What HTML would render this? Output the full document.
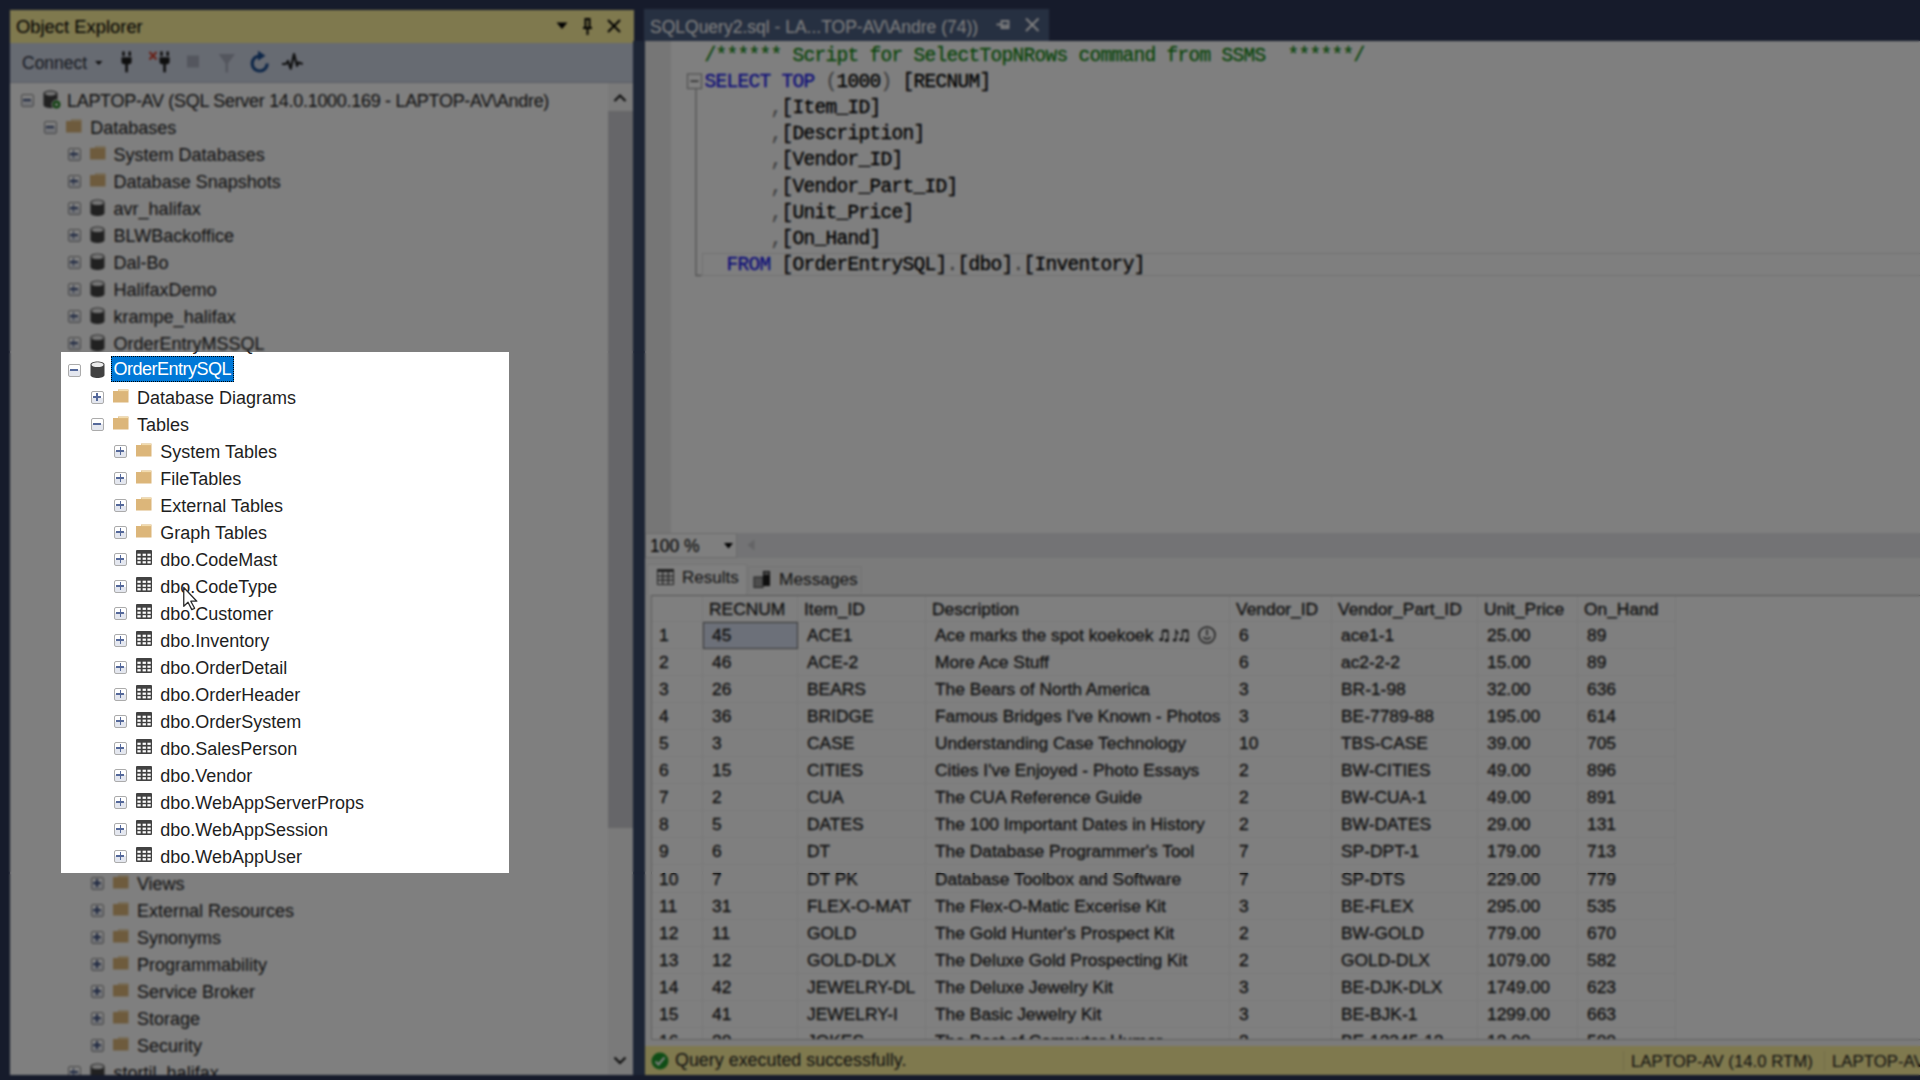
<!DOCTYPE html><html><head><meta charset="utf-8"><style>
*{margin:0;padding:0;box-sizing:border-box}
html,body{width:1920px;height:1080px;overflow:hidden;background:#2d3757;font-family:"Liberation Sans",sans-serif}
.abs{position:absolute}
#oe-title{left:10px;top:10px;width:624px;height:33px;background:#fff29d;}
#oe-tb{left:10px;top:43px;width:624px;height:40px;background:#cfd6e5;border-bottom:1.5px solid #b4bac8}
#tree{left:10px;top:83px;width:623px;height:992px;background:#fff;overflow:hidden;}
.row{position:absolute;left:0;height:27px;width:600px;line-height:27px;font-size:18px;color:#1e1e1e;white-space:nowrap}
.exp{position:absolute;width:13px;height:13px;top:7px;border:1.6px solid #ababab;border-radius:2px;background:linear-gradient(#fff 50%,#e4e7ef 50%)}
.exp:before{content:"";position:absolute;left:1.1px;top:4.25px;width:8px;height:1.5px;background:#54689a}
.exp.p:after{content:"";position:absolute;left:4.35px;top:1px;width:1.5px;height:8px;background:#54689a}
.ic{position:absolute}
.txt{position:absolute;top:0.8px}
.dim .txt{-webkit-text-stroke-width:0.05px}
.dim .exp{border-color:#8f8f8f}
.dim .exp:before,.dim .exp.p:after{background:#3f5283}
#vs{left:598px;top:0;width:25px;height:992px;background:#f4f4f4}
#editor{left:645px;top:41px;width:1275px;height:492px;background:#fff;overflow:hidden}
#margin{left:0;top:0;width:26px;height:492px;background:#ececec}
.code{position:absolute;left:59.5px;font-family:"Liberation Mono",monospace;font-size:19.5px;letter-spacing:-0.7px;line-height:26.2px;white-space:pre;color:#000;-webkit-text-stroke-width:0.3px}
.cm{color:#138a13}.kw{color:#1a1af0}.gy{color:#808080}
.gc{position:absolute;font-size:17.4px;-webkit-text-stroke-width:0.3px;color:#1e1e1e;white-space:nowrap;overflow:hidden;border-right:1px solid #f0f0f0;border-bottom:1px solid #f3f3f3}
#status{left:645px;top:1046px;width:1275px;height:29px;background:#fff29d}
</style></head><body>
<div id="oe-title" class="abs">
<div class="abs" style="left:6px;top:0;line-height:33px;font-size:18.4px;color:#000">Object Explorer</div>
<svg class="abs" style="left:546px;top:12px" width="12" height="8"><path d="M0.5 0.5h11L6 7z" fill="#000"/></svg>
<svg class="abs" style="left:572px;top:8px" width="11" height="18"><path d="M2.5 1h6M3.5 1v9M7.5 1v9M1 10h9M5.5 10v7" stroke="#000" stroke-width="2" fill="none"/></svg>
<svg class="abs" style="left:597px;top:9px" width="14" height="14"><path d="M1 1L13 13M13 1L1 13" stroke="#000" stroke-width="2"/></svg>
</div>
<div id="oe-tb" class="abs">
<div class="abs" style="left:12px;top:0;line-height:40px;font-size:17.5px;color:#2d3340">Connect</div>
<svg class="abs" style="left:0;top:0" width="624" height="40" viewBox="10 43 624 40"><g transform="translate(121,50)"><rect x="1.2" y="1.25" width="2.6" height="5" rx="1.2" fill="#1e1e1e"/><rect x="7.4" y="1.25" width="2.6" height="5" rx="1.2" fill="#1e1e1e"/><path d="M0.5 7.2H10.6V11.5Q10.6 14.3 8 14.3H3Q0.5 14.3 0.5 11.5Z" fill="#1e1e1e"/><rect x="4.3" y="14" width="2.6" height="8.3" fill="#1e1e1e"/></g><g transform="translate(159,50)"><rect x="1.2" y="1.25" width="2.6" height="5" rx="1.2" fill="#1e1e1e"/><rect x="7.4" y="1.25" width="2.6" height="5" rx="1.2" fill="#1e1e1e"/><path d="M0.5 7.2H10.6V11.5Q10.6 14.3 8 14.3H3Q0.5 14.3 0.5 11.5Z" fill="#1e1e1e"/><rect x="4.3" y="14" width="2.6" height="8.3" fill="#1e1e1e"/></g><path d="M149.5 52L156.5 59.5M156.5 52L149.5 59.5" stroke="#d0402c" stroke-width="2"/><rect x="187" y="55.5" width="12" height="12" fill="#a8adbc"/><path d="M218.6 54H235L228 63.5V72.5H225.5V63.5Z" fill="#a8adbc"/><path d="M259.7 56A7.5 7.5 0 1 0 267.2 63.5" stroke="#1c4e90" stroke-width="3.2" fill="none"/><path d="M258 50.7L265.5 55.8L258 60.8Z" fill="#1c4e90"/><path d="M282 64H286L288 61L290.7 68.7L294 54L297 65.8L298.5 62.5L302.7 64" stroke="#1e1e1e" stroke-width="2.2" fill="none" stroke-linejoin="round"/><path d="M95 61H102.5L98.75 65Z" fill="#1e1e1e"/></svg>
</div>
<div id="tree" class="abs">
<div class="row dim" style="top:4.0px">
<div class="exp m" style="left:11.0px"></div>
<svg class="ic" style="left:33.0px;top:3px" width="19" height="20"><path d="M0.5 3.5C0.5 -0.5 14.5 -0.5 14.5 3.5V15C14.5 19 0.5 19 0.5 15Z" fill="#424242"/><ellipse cx="7.5" cy="3.6" rx="5.6" ry="2.1" fill="#ececec"/><circle cx="13.5" cy="14.5" r="4.5" fill="#1e7e1e" stroke="#fff" stroke-width="1"/><circle cx="13.5" cy="14.5" r="1.6" fill="#fff"/></svg>
<div class="txt" style="left:57.0px;letter-spacing:-0.3px;">LAPTOP-AV (SQL Server 14.0.1000.169 - LAPTOP-AV\Andre)</div>
</div>
<div class="row dim" style="top:31.0px">
<div class="exp m" style="left:34.3px"></div>
<svg class="ic" style="left:56.3px;top:5px" width="16" height="14"><path d="M5 0.5h10.5v13h-15.5v-11.5h5z" fill="#dcb67a"/><path d="M5.5 1.5h9.5" stroke="#f2dcae" stroke-width="1.2"/></svg>
<div class="txt" style="left:80.3px;">Databases</div>
</div>
<div class="row dim" style="top:58.0px">
<div class="exp p" style="left:57.6px"></div>
<svg class="ic" style="left:79.6px;top:5px" width="16" height="14"><path d="M5 0.5h10.5v13h-15.5v-11.5h5z" fill="#dcb67a"/><path d="M5.5 1.5h9.5" stroke="#f2dcae" stroke-width="1.2"/></svg>
<div class="txt" style="left:103.6px;">System Databases</div>
</div>
<div class="row dim" style="top:85.0px">
<div class="exp p" style="left:57.6px"></div>
<svg class="ic" style="left:79.6px;top:5px" width="16" height="14"><path d="M5 0.5h10.5v13h-15.5v-11.5h5z" fill="#dcb67a"/><path d="M5.5 1.5h9.5" stroke="#f2dcae" stroke-width="1.2"/></svg>
<div class="txt" style="left:103.6px;">Database Snapshots</div>
</div>
<div class="row dim" style="top:112.0px">
<div class="exp p" style="left:57.6px"></div>
<svg class="ic" style="left:79.6px;top:4px" width="15" height="18"><path d="M0.5 3.5C0.5 -0.5 14.5 -0.5 14.5 3.5V14C14.5 18 0.5 18 0.5 14Z" fill="#424242"/><ellipse cx="7.5" cy="3.7" rx="6" ry="2.4" fill="#ececec"/></svg>
<div class="txt" style="left:103.6px;">avr_halifax</div>
</div>
<div class="row dim" style="top:139.0px">
<div class="exp p" style="left:57.6px"></div>
<svg class="ic" style="left:79.6px;top:4px" width="15" height="18"><path d="M0.5 3.5C0.5 -0.5 14.5 -0.5 14.5 3.5V14C14.5 18 0.5 18 0.5 14Z" fill="#424242"/><ellipse cx="7.5" cy="3.7" rx="6" ry="2.4" fill="#ececec"/></svg>
<div class="txt" style="left:103.6px;">BLWBackoffice</div>
</div>
<div class="row dim" style="top:166.0px">
<div class="exp p" style="left:57.6px"></div>
<svg class="ic" style="left:79.6px;top:4px" width="15" height="18"><path d="M0.5 3.5C0.5 -0.5 14.5 -0.5 14.5 3.5V14C14.5 18 0.5 18 0.5 14Z" fill="#424242"/><ellipse cx="7.5" cy="3.7" rx="6" ry="2.4" fill="#ececec"/></svg>
<div class="txt" style="left:103.6px;">Dal-Bo</div>
</div>
<div class="row dim" style="top:193.0px">
<div class="exp p" style="left:57.6px"></div>
<svg class="ic" style="left:79.6px;top:4px" width="15" height="18"><path d="M0.5 3.5C0.5 -0.5 14.5 -0.5 14.5 3.5V14C14.5 18 0.5 18 0.5 14Z" fill="#424242"/><ellipse cx="7.5" cy="3.7" rx="6" ry="2.4" fill="#ececec"/></svg>
<div class="txt" style="left:103.6px;">HalifaxDemo</div>
</div>
<div class="row dim" style="top:220.0px">
<div class="exp p" style="left:57.6px"></div>
<svg class="ic" style="left:79.6px;top:4px" width="15" height="18"><path d="M0.5 3.5C0.5 -0.5 14.5 -0.5 14.5 3.5V14C14.5 18 0.5 18 0.5 14Z" fill="#424242"/><ellipse cx="7.5" cy="3.7" rx="6" ry="2.4" fill="#ececec"/></svg>
<div class="txt" style="left:103.6px;">krampe_halifax</div>
</div>
<div class="row dim" style="top:247.0px">
<div class="exp p" style="left:57.6px"></div>
<svg class="ic" style="left:79.6px;top:4px" width="15" height="18"><path d="M0.5 3.5C0.5 -0.5 14.5 -0.5 14.5 3.5V14C14.5 18 0.5 18 0.5 14Z" fill="#424242"/><ellipse cx="7.5" cy="3.7" rx="6" ry="2.4" fill="#ececec"/></svg>
<div class="txt" style="left:103.6px;">OrderEntryMSSQL</div>
</div>
<div class="row" style="top:274.0px">
<div class="exp m" style="left:57.6px"></div>
<svg class="ic" style="left:79.6px;top:4px" width="15" height="18"><path d="M0.5 3.5C0.5 -0.5 14.5 -0.5 14.5 3.5V14C14.5 18 0.5 18 0.5 14Z" fill="#424242"/><ellipse cx="7.5" cy="3.7" rx="6" ry="2.4" fill="#ececec"/></svg>
<div class="txt" style="left:100.6px;top:-1px;height:26px;line-height:27.5px;padding:0 3px;letter-spacing:-0.5px;background:#0078d7;color:#fff;outline:1px dotted #000;outline-offset:-1px">OrderEntrySQL</div>
</div>
<div class="row" style="top:301.0px">
<div class="exp p" style="left:80.9px"></div>
<svg class="ic" style="left:102.9px;top:5px" width="16" height="14"><path d="M5 0.5h10.5v13h-15.5v-11.5h5z" fill="#dcb67a"/><path d="M5.5 1.5h9.5" stroke="#f2dcae" stroke-width="1.2"/></svg>
<div class="txt" style="left:126.9px;">Database Diagrams</div>
</div>
<div class="row" style="top:328.0px">
<div class="exp m" style="left:80.9px"></div>
<svg class="ic" style="left:102.9px;top:5px" width="16" height="14"><path d="M5 0.5h10.5v13h-15.5v-11.5h5z" fill="#dcb67a"/><path d="M5.5 1.5h9.5" stroke="#f2dcae" stroke-width="1.2"/></svg>
<div class="txt" style="left:126.9px;">Tables</div>
</div>
<div class="row" style="top:355.0px">
<div class="exp p" style="left:104.2px"></div>
<svg class="ic" style="left:126.2px;top:5px" width="16" height="14"><path d="M5 0.5h10.5v13h-15.5v-11.5h5z" fill="#dcb67a"/><path d="M5.5 1.5h9.5" stroke="#f2dcae" stroke-width="1.2"/></svg>
<div class="txt" style="left:150.2px;">System Tables</div>
</div>
<div class="row" style="top:382.0px">
<div class="exp p" style="left:104.2px"></div>
<svg class="ic" style="left:126.2px;top:5px" width="16" height="14"><path d="M5 0.5h10.5v13h-15.5v-11.5h5z" fill="#dcb67a"/><path d="M5.5 1.5h9.5" stroke="#f2dcae" stroke-width="1.2"/></svg>
<div class="txt" style="left:150.2px;">FileTables</div>
</div>
<div class="row" style="top:409.0px">
<div class="exp p" style="left:104.2px"></div>
<svg class="ic" style="left:126.2px;top:5px" width="16" height="14"><path d="M5 0.5h10.5v13h-15.5v-11.5h5z" fill="#dcb67a"/><path d="M5.5 1.5h9.5" stroke="#f2dcae" stroke-width="1.2"/></svg>
<div class="txt" style="left:150.2px;">External Tables</div>
</div>
<div class="row" style="top:436.0px">
<div class="exp p" style="left:104.2px"></div>
<svg class="ic" style="left:126.2px;top:5px" width="16" height="14"><path d="M5 0.5h10.5v13h-15.5v-11.5h5z" fill="#dcb67a"/><path d="M5.5 1.5h9.5" stroke="#f2dcae" stroke-width="1.2"/></svg>
<div class="txt" style="left:150.2px;">Graph Tables</div>
</div>
<div class="row" style="top:463.0px">
<div class="exp p" style="left:104.2px"></div>
<svg class="ic" style="left:126.2px;top:4px" width="16" height="15"><rect x="0" y="0" width="16" height="15" rx="1" fill="#424242"/><rect x="1.4" y="3.7" width="3.3" height="2.2" fill="#fff"/><rect x="6.6" y="3.7" width="3.3" height="2.2" fill="#fff"/><rect x="11.4" y="3.7" width="3.3" height="2.2" fill="#fff"/><rect x="1.4" y="7.6" width="3.3" height="2.2" fill="#fff"/><rect x="6.6" y="7.6" width="3.3" height="2.2" fill="#fff"/><rect x="11.4" y="7.6" width="3.3" height="2.2" fill="#fff"/><rect x="1.4" y="11.2" width="3.3" height="2.2" fill="#fff"/><rect x="6.6" y="11.2" width="3.3" height="2.2" fill="#fff"/><rect x="11.4" y="11.2" width="3.3" height="2.2" fill="#fff"/></svg>
<div class="txt" style="left:150.2px;">dbo.CodeMast</div>
</div>
<div class="row" style="top:490.0px">
<div class="exp p" style="left:104.2px"></div>
<svg class="ic" style="left:126.2px;top:4px" width="16" height="15"><rect x="0" y="0" width="16" height="15" rx="1" fill="#424242"/><rect x="1.4" y="3.7" width="3.3" height="2.2" fill="#fff"/><rect x="6.6" y="3.7" width="3.3" height="2.2" fill="#fff"/><rect x="11.4" y="3.7" width="3.3" height="2.2" fill="#fff"/><rect x="1.4" y="7.6" width="3.3" height="2.2" fill="#fff"/><rect x="6.6" y="7.6" width="3.3" height="2.2" fill="#fff"/><rect x="11.4" y="7.6" width="3.3" height="2.2" fill="#fff"/><rect x="1.4" y="11.2" width="3.3" height="2.2" fill="#fff"/><rect x="6.6" y="11.2" width="3.3" height="2.2" fill="#fff"/><rect x="11.4" y="11.2" width="3.3" height="2.2" fill="#fff"/></svg>
<div class="txt" style="left:150.2px;">dbo.CodeType</div>
</div>
<div class="row" style="top:517.0px">
<div class="exp p" style="left:104.2px"></div>
<svg class="ic" style="left:126.2px;top:4px" width="16" height="15"><rect x="0" y="0" width="16" height="15" rx="1" fill="#424242"/><rect x="1.4" y="3.7" width="3.3" height="2.2" fill="#fff"/><rect x="6.6" y="3.7" width="3.3" height="2.2" fill="#fff"/><rect x="11.4" y="3.7" width="3.3" height="2.2" fill="#fff"/><rect x="1.4" y="7.6" width="3.3" height="2.2" fill="#fff"/><rect x="6.6" y="7.6" width="3.3" height="2.2" fill="#fff"/><rect x="11.4" y="7.6" width="3.3" height="2.2" fill="#fff"/><rect x="1.4" y="11.2" width="3.3" height="2.2" fill="#fff"/><rect x="6.6" y="11.2" width="3.3" height="2.2" fill="#fff"/><rect x="11.4" y="11.2" width="3.3" height="2.2" fill="#fff"/></svg>
<div class="txt" style="left:150.2px;">dbo.Customer</div>
</div>
<div class="row" style="top:544.0px">
<div class="exp p" style="left:104.2px"></div>
<svg class="ic" style="left:126.2px;top:4px" width="16" height="15"><rect x="0" y="0" width="16" height="15" rx="1" fill="#424242"/><rect x="1.4" y="3.7" width="3.3" height="2.2" fill="#fff"/><rect x="6.6" y="3.7" width="3.3" height="2.2" fill="#fff"/><rect x="11.4" y="3.7" width="3.3" height="2.2" fill="#fff"/><rect x="1.4" y="7.6" width="3.3" height="2.2" fill="#fff"/><rect x="6.6" y="7.6" width="3.3" height="2.2" fill="#fff"/><rect x="11.4" y="7.6" width="3.3" height="2.2" fill="#fff"/><rect x="1.4" y="11.2" width="3.3" height="2.2" fill="#fff"/><rect x="6.6" y="11.2" width="3.3" height="2.2" fill="#fff"/><rect x="11.4" y="11.2" width="3.3" height="2.2" fill="#fff"/></svg>
<div class="txt" style="left:150.2px;">dbo.Inventory</div>
</div>
<div class="row" style="top:571.0px">
<div class="exp p" style="left:104.2px"></div>
<svg class="ic" style="left:126.2px;top:4px" width="16" height="15"><rect x="0" y="0" width="16" height="15" rx="1" fill="#424242"/><rect x="1.4" y="3.7" width="3.3" height="2.2" fill="#fff"/><rect x="6.6" y="3.7" width="3.3" height="2.2" fill="#fff"/><rect x="11.4" y="3.7" width="3.3" height="2.2" fill="#fff"/><rect x="1.4" y="7.6" width="3.3" height="2.2" fill="#fff"/><rect x="6.6" y="7.6" width="3.3" height="2.2" fill="#fff"/><rect x="11.4" y="7.6" width="3.3" height="2.2" fill="#fff"/><rect x="1.4" y="11.2" width="3.3" height="2.2" fill="#fff"/><rect x="6.6" y="11.2" width="3.3" height="2.2" fill="#fff"/><rect x="11.4" y="11.2" width="3.3" height="2.2" fill="#fff"/></svg>
<div class="txt" style="left:150.2px;">dbo.OrderDetail</div>
</div>
<div class="row" style="top:598.0px">
<div class="exp p" style="left:104.2px"></div>
<svg class="ic" style="left:126.2px;top:4px" width="16" height="15"><rect x="0" y="0" width="16" height="15" rx="1" fill="#424242"/><rect x="1.4" y="3.7" width="3.3" height="2.2" fill="#fff"/><rect x="6.6" y="3.7" width="3.3" height="2.2" fill="#fff"/><rect x="11.4" y="3.7" width="3.3" height="2.2" fill="#fff"/><rect x="1.4" y="7.6" width="3.3" height="2.2" fill="#fff"/><rect x="6.6" y="7.6" width="3.3" height="2.2" fill="#fff"/><rect x="11.4" y="7.6" width="3.3" height="2.2" fill="#fff"/><rect x="1.4" y="11.2" width="3.3" height="2.2" fill="#fff"/><rect x="6.6" y="11.2" width="3.3" height="2.2" fill="#fff"/><rect x="11.4" y="11.2" width="3.3" height="2.2" fill="#fff"/></svg>
<div class="txt" style="left:150.2px;">dbo.OrderHeader</div>
</div>
<div class="row" style="top:625.0px">
<div class="exp p" style="left:104.2px"></div>
<svg class="ic" style="left:126.2px;top:4px" width="16" height="15"><rect x="0" y="0" width="16" height="15" rx="1" fill="#424242"/><rect x="1.4" y="3.7" width="3.3" height="2.2" fill="#fff"/><rect x="6.6" y="3.7" width="3.3" height="2.2" fill="#fff"/><rect x="11.4" y="3.7" width="3.3" height="2.2" fill="#fff"/><rect x="1.4" y="7.6" width="3.3" height="2.2" fill="#fff"/><rect x="6.6" y="7.6" width="3.3" height="2.2" fill="#fff"/><rect x="11.4" y="7.6" width="3.3" height="2.2" fill="#fff"/><rect x="1.4" y="11.2" width="3.3" height="2.2" fill="#fff"/><rect x="6.6" y="11.2" width="3.3" height="2.2" fill="#fff"/><rect x="11.4" y="11.2" width="3.3" height="2.2" fill="#fff"/></svg>
<div class="txt" style="left:150.2px;">dbo.OrderSystem</div>
</div>
<div class="row" style="top:652.0px">
<div class="exp p" style="left:104.2px"></div>
<svg class="ic" style="left:126.2px;top:4px" width="16" height="15"><rect x="0" y="0" width="16" height="15" rx="1" fill="#424242"/><rect x="1.4" y="3.7" width="3.3" height="2.2" fill="#fff"/><rect x="6.6" y="3.7" width="3.3" height="2.2" fill="#fff"/><rect x="11.4" y="3.7" width="3.3" height="2.2" fill="#fff"/><rect x="1.4" y="7.6" width="3.3" height="2.2" fill="#fff"/><rect x="6.6" y="7.6" width="3.3" height="2.2" fill="#fff"/><rect x="11.4" y="7.6" width="3.3" height="2.2" fill="#fff"/><rect x="1.4" y="11.2" width="3.3" height="2.2" fill="#fff"/><rect x="6.6" y="11.2" width="3.3" height="2.2" fill="#fff"/><rect x="11.4" y="11.2" width="3.3" height="2.2" fill="#fff"/></svg>
<div class="txt" style="left:150.2px;">dbo.SalesPerson</div>
</div>
<div class="row" style="top:679.0px">
<div class="exp p" style="left:104.2px"></div>
<svg class="ic" style="left:126.2px;top:4px" width="16" height="15"><rect x="0" y="0" width="16" height="15" rx="1" fill="#424242"/><rect x="1.4" y="3.7" width="3.3" height="2.2" fill="#fff"/><rect x="6.6" y="3.7" width="3.3" height="2.2" fill="#fff"/><rect x="11.4" y="3.7" width="3.3" height="2.2" fill="#fff"/><rect x="1.4" y="7.6" width="3.3" height="2.2" fill="#fff"/><rect x="6.6" y="7.6" width="3.3" height="2.2" fill="#fff"/><rect x="11.4" y="7.6" width="3.3" height="2.2" fill="#fff"/><rect x="1.4" y="11.2" width="3.3" height="2.2" fill="#fff"/><rect x="6.6" y="11.2" width="3.3" height="2.2" fill="#fff"/><rect x="11.4" y="11.2" width="3.3" height="2.2" fill="#fff"/></svg>
<div class="txt" style="left:150.2px;">dbo.Vendor</div>
</div>
<div class="row" style="top:706.0px">
<div class="exp p" style="left:104.2px"></div>
<svg class="ic" style="left:126.2px;top:4px" width="16" height="15"><rect x="0" y="0" width="16" height="15" rx="1" fill="#424242"/><rect x="1.4" y="3.7" width="3.3" height="2.2" fill="#fff"/><rect x="6.6" y="3.7" width="3.3" height="2.2" fill="#fff"/><rect x="11.4" y="3.7" width="3.3" height="2.2" fill="#fff"/><rect x="1.4" y="7.6" width="3.3" height="2.2" fill="#fff"/><rect x="6.6" y="7.6" width="3.3" height="2.2" fill="#fff"/><rect x="11.4" y="7.6" width="3.3" height="2.2" fill="#fff"/><rect x="1.4" y="11.2" width="3.3" height="2.2" fill="#fff"/><rect x="6.6" y="11.2" width="3.3" height="2.2" fill="#fff"/><rect x="11.4" y="11.2" width="3.3" height="2.2" fill="#fff"/></svg>
<div class="txt" style="left:150.2px;">dbo.WebAppServerProps</div>
</div>
<div class="row" style="top:733.0px">
<div class="exp p" style="left:104.2px"></div>
<svg class="ic" style="left:126.2px;top:4px" width="16" height="15"><rect x="0" y="0" width="16" height="15" rx="1" fill="#424242"/><rect x="1.4" y="3.7" width="3.3" height="2.2" fill="#fff"/><rect x="6.6" y="3.7" width="3.3" height="2.2" fill="#fff"/><rect x="11.4" y="3.7" width="3.3" height="2.2" fill="#fff"/><rect x="1.4" y="7.6" width="3.3" height="2.2" fill="#fff"/><rect x="6.6" y="7.6" width="3.3" height="2.2" fill="#fff"/><rect x="11.4" y="7.6" width="3.3" height="2.2" fill="#fff"/><rect x="1.4" y="11.2" width="3.3" height="2.2" fill="#fff"/><rect x="6.6" y="11.2" width="3.3" height="2.2" fill="#fff"/><rect x="11.4" y="11.2" width="3.3" height="2.2" fill="#fff"/></svg>
<div class="txt" style="left:150.2px;">dbo.WebAppSession</div>
</div>
<div class="row" style="top:760.0px">
<div class="exp p" style="left:104.2px"></div>
<svg class="ic" style="left:126.2px;top:4px" width="16" height="15"><rect x="0" y="0" width="16" height="15" rx="1" fill="#424242"/><rect x="1.4" y="3.7" width="3.3" height="2.2" fill="#fff"/><rect x="6.6" y="3.7" width="3.3" height="2.2" fill="#fff"/><rect x="11.4" y="3.7" width="3.3" height="2.2" fill="#fff"/><rect x="1.4" y="7.6" width="3.3" height="2.2" fill="#fff"/><rect x="6.6" y="7.6" width="3.3" height="2.2" fill="#fff"/><rect x="11.4" y="7.6" width="3.3" height="2.2" fill="#fff"/><rect x="1.4" y="11.2" width="3.3" height="2.2" fill="#fff"/><rect x="6.6" y="11.2" width="3.3" height="2.2" fill="#fff"/><rect x="11.4" y="11.2" width="3.3" height="2.2" fill="#fff"/></svg>
<div class="txt" style="left:150.2px;">dbo.WebAppUser</div>
</div>
<div class="row dim" style="top:787.0px">
<div class="exp p" style="left:80.9px"></div>
<svg class="ic" style="left:102.9px;top:5px" width="16" height="14"><path d="M5 0.5h10.5v13h-15.5v-11.5h5z" fill="#dcb67a"/><path d="M5.5 1.5h9.5" stroke="#f2dcae" stroke-width="1.2"/></svg>
<div class="txt" style="left:126.9px;">Views</div>
</div>
<div class="row dim" style="top:814.0px">
<div class="exp p" style="left:80.9px"></div>
<svg class="ic" style="left:102.9px;top:5px" width="16" height="14"><path d="M5 0.5h10.5v13h-15.5v-11.5h5z" fill="#dcb67a"/><path d="M5.5 1.5h9.5" stroke="#f2dcae" stroke-width="1.2"/></svg>
<div class="txt" style="left:126.9px;">External Resources</div>
</div>
<div class="row dim" style="top:841.0px">
<div class="exp p" style="left:80.9px"></div>
<svg class="ic" style="left:102.9px;top:5px" width="16" height="14"><path d="M5 0.5h10.5v13h-15.5v-11.5h5z" fill="#dcb67a"/><path d="M5.5 1.5h9.5" stroke="#f2dcae" stroke-width="1.2"/></svg>
<div class="txt" style="left:126.9px;">Synonyms</div>
</div>
<div class="row dim" style="top:868.0px">
<div class="exp p" style="left:80.9px"></div>
<svg class="ic" style="left:102.9px;top:5px" width="16" height="14"><path d="M5 0.5h10.5v13h-15.5v-11.5h5z" fill="#dcb67a"/><path d="M5.5 1.5h9.5" stroke="#f2dcae" stroke-width="1.2"/></svg>
<div class="txt" style="left:126.9px;">Programmability</div>
</div>
<div class="row dim" style="top:895.0px">
<div class="exp p" style="left:80.9px"></div>
<svg class="ic" style="left:102.9px;top:5px" width="16" height="14"><path d="M5 0.5h10.5v13h-15.5v-11.5h5z" fill="#dcb67a"/><path d="M5.5 1.5h9.5" stroke="#f2dcae" stroke-width="1.2"/></svg>
<div class="txt" style="left:126.9px;">Service Broker</div>
</div>
<div class="row dim" style="top:922.0px">
<div class="exp p" style="left:80.9px"></div>
<svg class="ic" style="left:102.9px;top:5px" width="16" height="14"><path d="M5 0.5h10.5v13h-15.5v-11.5h5z" fill="#dcb67a"/><path d="M5.5 1.5h9.5" stroke="#f2dcae" stroke-width="1.2"/></svg>
<div class="txt" style="left:126.9px;">Storage</div>
</div>
<div class="row dim" style="top:949.0px">
<div class="exp p" style="left:80.9px"></div>
<svg class="ic" style="left:102.9px;top:5px" width="16" height="14"><path d="M5 0.5h10.5v13h-15.5v-11.5h5z" fill="#dcb67a"/><path d="M5.5 1.5h9.5" stroke="#f2dcae" stroke-width="1.2"/></svg>
<div class="txt" style="left:126.9px;">Security</div>
</div>
<div class="row dim" style="top:976.0px">
<div class="exp p" style="left:57.6px"></div>
<svg class="ic" style="left:79.6px;top:4px" width="15" height="18"><path d="M0.5 3.5C0.5 -0.5 14.5 -0.5 14.5 3.5V14C14.5 18 0.5 18 0.5 14Z" fill="#424242"/><ellipse cx="7.5" cy="3.7" rx="6" ry="2.4" fill="#ececec"/></svg>
<div class="txt" style="left:103.6px;">stortil_halifax</div>
</div>
<div id="vs" class="abs"><div class="abs" style="left:0;top:28px;width:25px;height:717px;background:#cdcdd2"></div><svg class="abs" style="left:0;top:0" width="25" height="992"><path d="M6.5 18L12 12.5L17.5 18" stroke="#1e1e1e" stroke-width="2.2" fill="none"/><path d="M6.5 974.5L12 980L17.5 974.5" stroke="#1e1e1e" stroke-width="2.2" fill="none"/></svg></div>
</div>
<div class="abs" style="left:633px;top:41px;width:12px;height:1034px;background:#3a4a6a"></div>
<div class="abs" style="left:644px;top:9px;width:405px;height:32px;background:#4d6082"></div>
<div class="abs" style="left:650px;top:10.5px;line-height:32px;font-size:17.5px;color:#fff">SQLQuery2.sql - LA...TOP-AV\Andre (74))</div>
<svg class="abs" style="left:990px;top:15px" width="55" height="20"><path d="M6.5 9.5H11.5M11.5 5V14M11.5 6H18.5V13H11.5M11.5 10.5H18.5" stroke="#fff" stroke-width="1.8" fill="none"/><path d="M36 3.5L48.5 16M48.5 3.5L36 16" stroke="#fff" stroke-width="2"/></svg>
<div id="editor" class="abs"><div id="margin" class="abs"></div>
<div class="abs" style="left:57px;top:211.5px;width:1300px;height:23.5px;border:1px solid #e2e2e2"></div>
<svg class="abs" style="left:0;top:0" width="80" height="300"><rect x="42.5" y="33" width="14" height="14.5" fill="#fff" stroke="#a5a5a5" stroke-width="1.3"/><path d="M45.5 40.2H53.5" stroke="#555" stroke-width="1.5"/><path d="M51 47.5V234.5H56.5" stroke="#a5a5a5" stroke-width="1.3" fill="none"/></svg>
<div class="code" style="top:1.5px"><span class="cm">/****** Script for SelectTopNRows command from SSMS  ******/</span></div>
<div class="code" style="top:27.7px"><span class="kw">SELECT</span> <span class="kw">TOP</span> <span class="gy">(</span>1000<span class="gy">)</span> [RECNUM]</div>
<div class="code" style="top:53.9px">      <span class="gy">,</span>[Item_ID]</div>
<div class="code" style="top:80.1px">      <span class="gy">,</span>[Description]</div>
<div class="code" style="top:106.3px">      <span class="gy">,</span>[Vendor_ID]</div>
<div class="code" style="top:132.5px">      <span class="gy">,</span>[Vendor_Part_ID]</div>
<div class="code" style="top:158.7px">      <span class="gy">,</span>[Unit_Price]</div>
<div class="code" style="top:184.9px">      <span class="gy">,</span>[On_Hand]</div>
<div class="code" style="top:211.1px">  <span class="kw">FROM</span> [OrderEntrySQL]<span class="gy">.</span>[dbo]<span class="gy">.</span>[Inventory]</div>
</div>
<div class="abs" style="left:645px;top:533px;width:1275px;height:25px;background:#e6e7ea"></div>
<div class="abs" style="left:645px;top:533px;width:92px;height:25px;background:#fff;border:1px solid #d6d6d6"></div>
<div class="abs" style="left:650px;top:534px;line-height:25px;font-size:17.5px;color:#000">100 %</div>
<svg class="abs" style="left:724px;top:543px" width="9" height="6"><path d="M0 0h9L4.5 5.5z" fill="#000"/></svg>
<svg class="abs" style="left:747px;top:539px" width="8" height="12"><path d="M7.5 0.5v11L0.5 6z" fill="#c8c8cc"/></svg>
<div class="abs" style="left:645px;top:558px;width:1275px;height:488px;background:#f7f7f7"></div>
<div class="abs" style="left:647px;top:564px;width:100px;height:31px;background:#fff;border:1px solid #e6e6e6;border-bottom:none"></div>
<svg class="abs" style="left:657px;top:569px" width="17" height="16"><rect x="0.5" y="0.5" width="16" height="15" fill="#fff" stroke="#424242"/><rect x="0" y="0" width="17" height="3" fill="#424242"/><path d="M0 7.2h17M0 11.2h17M5.7 3v13M11.3 3v13" stroke="#424242" stroke-width="1.2"/></svg>
<div class="abs" style="left:682px;top:564px;line-height:28px;font-size:17px;color:#1e1e1e">Results</div>
<div class="abs" style="left:748px;top:566px;width:114px;height:27px;background:#f5f5f5;border:1px solid #e6e6e6;border-bottom:none"></div>
<svg class="abs" style="left:753px;top:570px" width="18" height="18"><rect x="1" y="7" width="9" height="10.5" fill="#9a9a9a" stroke="#424242"/><rect x="10" y="1" width="7" height="15" fill="#1e1e1e"/><rect x="11" y="2" width="5" height="3" fill="#888"/></svg>
<div class="abs" style="left:779px;top:564px;line-height:30px;font-size:17.3px;color:#1e1e1e">Messages</div>
<div class="abs" style="left:651px;top:595px;width:1269px;height:445px;background:#fff;border-left:1.5px solid #bdbdbd;border-top:1px solid #a8a8a8;border-bottom:1px solid #bcbcbc;overflow:hidden">
<div class="gc" style="left:0px;top:0;width:51px;height:26px;line-height:26px;padding-left:6px"></div>
<div class="gc" style="left:51px;top:0;width:95px;height:26px;line-height:26px;padding-left:6px">RECNUM</div>
<div class="gc" style="left:146px;top:0;width:128px;height:26px;line-height:26px;padding-left:6px">Item_ID</div>
<div class="gc" style="left:274px;top:0;width:304px;height:26px;line-height:26px;padding-left:6px">Description</div>
<div class="gc" style="left:578px;top:0;width:102px;height:26px;line-height:26px;padding-left:6px">Vendor_ID</div>
<div class="gc" style="left:680px;top:0;width:146px;height:26px;line-height:26px;padding-left:6px">Vendor_Part_ID</div>
<div class="gc" style="left:826px;top:0;width:100px;height:26px;line-height:26px;padding-left:6px">Unit_Price</div>
<div class="gc" style="left:926px;top:0;width:98px;height:26px;line-height:26px;padding-left:6px">On_Hand</div>
<div class="gc" style="left:0px;top:26.00px;width:51px;height:27px;line-height:27.5px;padding-left:7px;">1</div>
<div class="gc" style="left:51px;top:26.00px;width:95px;height:27px;line-height:27.5px;padding-left:9px;background:#d9e1f2;outline:1.5px solid #6e6e6e;outline-offset:-1.5px;">45</div>
<div class="gc" style="left:146px;top:26.00px;width:128px;height:27px;line-height:27.5px;padding-left:9px;">ACE1</div>
<div class="gc" style="left:274px;top:26.00px;width:304px;height:27px;line-height:27.5px;padding-left:9px;">Ace marks the spot koekoek</div>
<div class="gc" style="left:578px;top:26.00px;width:102px;height:27px;line-height:27.5px;padding-left:9px;">6</div>
<div class="gc" style="left:680px;top:26.00px;width:146px;height:27px;line-height:27.5px;padding-left:9px;">ace1-1</div>
<div class="gc" style="left:826px;top:26.00px;width:100px;height:27px;line-height:27.5px;padding-left:9px;">25.00</div>
<div class="gc" style="left:926px;top:26.00px;width:98px;height:27px;line-height:27.5px;padding-left:9px;">89</div>
<div class="gc" style="left:0px;top:53.06px;width:51px;height:27px;line-height:27.5px;padding-left:7px;">2</div>
<div class="gc" style="left:51px;top:53.06px;width:95px;height:27px;line-height:27.5px;padding-left:9px;">46</div>
<div class="gc" style="left:146px;top:53.06px;width:128px;height:27px;line-height:27.5px;padding-left:9px;">ACE-2</div>
<div class="gc" style="left:274px;top:53.06px;width:304px;height:27px;line-height:27.5px;padding-left:9px;">More Ace Stuff</div>
<div class="gc" style="left:578px;top:53.06px;width:102px;height:27px;line-height:27.5px;padding-left:9px;">6</div>
<div class="gc" style="left:680px;top:53.06px;width:146px;height:27px;line-height:27.5px;padding-left:9px;">ac2-2-2</div>
<div class="gc" style="left:826px;top:53.06px;width:100px;height:27px;line-height:27.5px;padding-left:9px;">15.00</div>
<div class="gc" style="left:926px;top:53.06px;width:98px;height:27px;line-height:27.5px;padding-left:9px;">89</div>
<div class="gc" style="left:0px;top:80.12px;width:51px;height:27px;line-height:27.5px;padding-left:7px;">3</div>
<div class="gc" style="left:51px;top:80.12px;width:95px;height:27px;line-height:27.5px;padding-left:9px;">26</div>
<div class="gc" style="left:146px;top:80.12px;width:128px;height:27px;line-height:27.5px;padding-left:9px;">BEARS</div>
<div class="gc" style="left:274px;top:80.12px;width:304px;height:27px;line-height:27.5px;padding-left:9px;">The Bears of North America</div>
<div class="gc" style="left:578px;top:80.12px;width:102px;height:27px;line-height:27.5px;padding-left:9px;">3</div>
<div class="gc" style="left:680px;top:80.12px;width:146px;height:27px;line-height:27.5px;padding-left:9px;">BR-1-98</div>
<div class="gc" style="left:826px;top:80.12px;width:100px;height:27px;line-height:27.5px;padding-left:9px;">32.00</div>
<div class="gc" style="left:926px;top:80.12px;width:98px;height:27px;line-height:27.5px;padding-left:9px;">636</div>
<div class="gc" style="left:0px;top:107.18px;width:51px;height:27px;line-height:27.5px;padding-left:7px;">4</div>
<div class="gc" style="left:51px;top:107.18px;width:95px;height:27px;line-height:27.5px;padding-left:9px;">36</div>
<div class="gc" style="left:146px;top:107.18px;width:128px;height:27px;line-height:27.5px;padding-left:9px;">BRIDGE</div>
<div class="gc" style="left:274px;top:107.18px;width:304px;height:27px;line-height:27.5px;padding-left:9px;">Famous Bridges I've Known - Photos</div>
<div class="gc" style="left:578px;top:107.18px;width:102px;height:27px;line-height:27.5px;padding-left:9px;">3</div>
<div class="gc" style="left:680px;top:107.18px;width:146px;height:27px;line-height:27.5px;padding-left:9px;">BE-7789-88</div>
<div class="gc" style="left:826px;top:107.18px;width:100px;height:27px;line-height:27.5px;padding-left:9px;">195.00</div>
<div class="gc" style="left:926px;top:107.18px;width:98px;height:27px;line-height:27.5px;padding-left:9px;">614</div>
<div class="gc" style="left:0px;top:134.24px;width:51px;height:27px;line-height:27.5px;padding-left:7px;">5</div>
<div class="gc" style="left:51px;top:134.24px;width:95px;height:27px;line-height:27.5px;padding-left:9px;">3</div>
<div class="gc" style="left:146px;top:134.24px;width:128px;height:27px;line-height:27.5px;padding-left:9px;">CASE</div>
<div class="gc" style="left:274px;top:134.24px;width:304px;height:27px;line-height:27.5px;padding-left:9px;">Understanding Case Technology</div>
<div class="gc" style="left:578px;top:134.24px;width:102px;height:27px;line-height:27.5px;padding-left:9px;">10</div>
<div class="gc" style="left:680px;top:134.24px;width:146px;height:27px;line-height:27.5px;padding-left:9px;">TBS-CASE</div>
<div class="gc" style="left:826px;top:134.24px;width:100px;height:27px;line-height:27.5px;padding-left:9px;">39.00</div>
<div class="gc" style="left:926px;top:134.24px;width:98px;height:27px;line-height:27.5px;padding-left:9px;">705</div>
<div class="gc" style="left:0px;top:161.30px;width:51px;height:27px;line-height:27.5px;padding-left:7px;">6</div>
<div class="gc" style="left:51px;top:161.30px;width:95px;height:27px;line-height:27.5px;padding-left:9px;">15</div>
<div class="gc" style="left:146px;top:161.30px;width:128px;height:27px;line-height:27.5px;padding-left:9px;">CITIES</div>
<div class="gc" style="left:274px;top:161.30px;width:304px;height:27px;line-height:27.5px;padding-left:9px;">Cities I've Enjoyed - Photo Essays</div>
<div class="gc" style="left:578px;top:161.30px;width:102px;height:27px;line-height:27.5px;padding-left:9px;">2</div>
<div class="gc" style="left:680px;top:161.30px;width:146px;height:27px;line-height:27.5px;padding-left:9px;">BW-CITIES</div>
<div class="gc" style="left:826px;top:161.30px;width:100px;height:27px;line-height:27.5px;padding-left:9px;">49.00</div>
<div class="gc" style="left:926px;top:161.30px;width:98px;height:27px;line-height:27.5px;padding-left:9px;">896</div>
<div class="gc" style="left:0px;top:188.36px;width:51px;height:27px;line-height:27.5px;padding-left:7px;">7</div>
<div class="gc" style="left:51px;top:188.36px;width:95px;height:27px;line-height:27.5px;padding-left:9px;">2</div>
<div class="gc" style="left:146px;top:188.36px;width:128px;height:27px;line-height:27.5px;padding-left:9px;">CUA</div>
<div class="gc" style="left:274px;top:188.36px;width:304px;height:27px;line-height:27.5px;padding-left:9px;">The CUA Reference Guide</div>
<div class="gc" style="left:578px;top:188.36px;width:102px;height:27px;line-height:27.5px;padding-left:9px;">2</div>
<div class="gc" style="left:680px;top:188.36px;width:146px;height:27px;line-height:27.5px;padding-left:9px;">BW-CUA-1</div>
<div class="gc" style="left:826px;top:188.36px;width:100px;height:27px;line-height:27.5px;padding-left:9px;">49.00</div>
<div class="gc" style="left:926px;top:188.36px;width:98px;height:27px;line-height:27.5px;padding-left:9px;">891</div>
<div class="gc" style="left:0px;top:215.42px;width:51px;height:27px;line-height:27.5px;padding-left:7px;">8</div>
<div class="gc" style="left:51px;top:215.42px;width:95px;height:27px;line-height:27.5px;padding-left:9px;">5</div>
<div class="gc" style="left:146px;top:215.42px;width:128px;height:27px;line-height:27.5px;padding-left:9px;">DATES</div>
<div class="gc" style="left:274px;top:215.42px;width:304px;height:27px;line-height:27.5px;padding-left:9px;">The 100 Important Dates in History</div>
<div class="gc" style="left:578px;top:215.42px;width:102px;height:27px;line-height:27.5px;padding-left:9px;">2</div>
<div class="gc" style="left:680px;top:215.42px;width:146px;height:27px;line-height:27.5px;padding-left:9px;">BW-DATES</div>
<div class="gc" style="left:826px;top:215.42px;width:100px;height:27px;line-height:27.5px;padding-left:9px;">29.00</div>
<div class="gc" style="left:926px;top:215.42px;width:98px;height:27px;line-height:27.5px;padding-left:9px;">131</div>
<div class="gc" style="left:0px;top:242.48px;width:51px;height:27px;line-height:27.5px;padding-left:7px;">9</div>
<div class="gc" style="left:51px;top:242.48px;width:95px;height:27px;line-height:27.5px;padding-left:9px;">6</div>
<div class="gc" style="left:146px;top:242.48px;width:128px;height:27px;line-height:27.5px;padding-left:9px;">DT</div>
<div class="gc" style="left:274px;top:242.48px;width:304px;height:27px;line-height:27.5px;padding-left:9px;">The Database Programmer's Tool</div>
<div class="gc" style="left:578px;top:242.48px;width:102px;height:27px;line-height:27.5px;padding-left:9px;">7</div>
<div class="gc" style="left:680px;top:242.48px;width:146px;height:27px;line-height:27.5px;padding-left:9px;">SP-DPT-1</div>
<div class="gc" style="left:826px;top:242.48px;width:100px;height:27px;line-height:27.5px;padding-left:9px;">179.00</div>
<div class="gc" style="left:926px;top:242.48px;width:98px;height:27px;line-height:27.5px;padding-left:9px;">713</div>
<div class="gc" style="left:0px;top:269.54px;width:51px;height:27px;line-height:27.5px;padding-left:7px;">10</div>
<div class="gc" style="left:51px;top:269.54px;width:95px;height:27px;line-height:27.5px;padding-left:9px;">7</div>
<div class="gc" style="left:146px;top:269.54px;width:128px;height:27px;line-height:27.5px;padding-left:9px;">DT PK</div>
<div class="gc" style="left:274px;top:269.54px;width:304px;height:27px;line-height:27.5px;padding-left:9px;">Database Toolbox and Software</div>
<div class="gc" style="left:578px;top:269.54px;width:102px;height:27px;line-height:27.5px;padding-left:9px;">7</div>
<div class="gc" style="left:680px;top:269.54px;width:146px;height:27px;line-height:27.5px;padding-left:9px;">SP-DTS</div>
<div class="gc" style="left:826px;top:269.54px;width:100px;height:27px;line-height:27.5px;padding-left:9px;">229.00</div>
<div class="gc" style="left:926px;top:269.54px;width:98px;height:27px;line-height:27.5px;padding-left:9px;">779</div>
<div class="gc" style="left:0px;top:296.60px;width:51px;height:27px;line-height:27.5px;padding-left:7px;">11</div>
<div class="gc" style="left:51px;top:296.60px;width:95px;height:27px;line-height:27.5px;padding-left:9px;">31</div>
<div class="gc" style="left:146px;top:296.60px;width:128px;height:27px;line-height:27.5px;padding-left:9px;">FLEX-O-MAT</div>
<div class="gc" style="left:274px;top:296.60px;width:304px;height:27px;line-height:27.5px;padding-left:9px;">The Flex-O-Matic Excerise Kit</div>
<div class="gc" style="left:578px;top:296.60px;width:102px;height:27px;line-height:27.5px;padding-left:9px;">3</div>
<div class="gc" style="left:680px;top:296.60px;width:146px;height:27px;line-height:27.5px;padding-left:9px;">BE-FLEX</div>
<div class="gc" style="left:826px;top:296.60px;width:100px;height:27px;line-height:27.5px;padding-left:9px;">295.00</div>
<div class="gc" style="left:926px;top:296.60px;width:98px;height:27px;line-height:27.5px;padding-left:9px;">535</div>
<div class="gc" style="left:0px;top:323.66px;width:51px;height:27px;line-height:27.5px;padding-left:7px;">12</div>
<div class="gc" style="left:51px;top:323.66px;width:95px;height:27px;line-height:27.5px;padding-left:9px;">11</div>
<div class="gc" style="left:146px;top:323.66px;width:128px;height:27px;line-height:27.5px;padding-left:9px;">GOLD</div>
<div class="gc" style="left:274px;top:323.66px;width:304px;height:27px;line-height:27.5px;padding-left:9px;">The Gold Hunter's Prospect Kit</div>
<div class="gc" style="left:578px;top:323.66px;width:102px;height:27px;line-height:27.5px;padding-left:9px;">2</div>
<div class="gc" style="left:680px;top:323.66px;width:146px;height:27px;line-height:27.5px;padding-left:9px;">BW-GOLD</div>
<div class="gc" style="left:826px;top:323.66px;width:100px;height:27px;line-height:27.5px;padding-left:9px;">779.00</div>
<div class="gc" style="left:926px;top:323.66px;width:98px;height:27px;line-height:27.5px;padding-left:9px;">670</div>
<div class="gc" style="left:0px;top:350.72px;width:51px;height:27px;line-height:27.5px;padding-left:7px;">13</div>
<div class="gc" style="left:51px;top:350.72px;width:95px;height:27px;line-height:27.5px;padding-left:9px;">12</div>
<div class="gc" style="left:146px;top:350.72px;width:128px;height:27px;line-height:27.5px;padding-left:9px;">GOLD-DLX</div>
<div class="gc" style="left:274px;top:350.72px;width:304px;height:27px;line-height:27.5px;padding-left:9px;">The Deluxe Gold Prospecting Kit</div>
<div class="gc" style="left:578px;top:350.72px;width:102px;height:27px;line-height:27.5px;padding-left:9px;">2</div>
<div class="gc" style="left:680px;top:350.72px;width:146px;height:27px;line-height:27.5px;padding-left:9px;">GOLD-DLX</div>
<div class="gc" style="left:826px;top:350.72px;width:100px;height:27px;line-height:27.5px;padding-left:9px;">1079.00</div>
<div class="gc" style="left:926px;top:350.72px;width:98px;height:27px;line-height:27.5px;padding-left:9px;">582</div>
<div class="gc" style="left:0px;top:377.78px;width:51px;height:27px;line-height:27.5px;padding-left:7px;">14</div>
<div class="gc" style="left:51px;top:377.78px;width:95px;height:27px;line-height:27.5px;padding-left:9px;">42</div>
<div class="gc" style="left:146px;top:377.78px;width:128px;height:27px;line-height:27.5px;padding-left:9px;">JEWELRY-DL</div>
<div class="gc" style="left:274px;top:377.78px;width:304px;height:27px;line-height:27.5px;padding-left:9px;">The Deluxe Jewelry Kit</div>
<div class="gc" style="left:578px;top:377.78px;width:102px;height:27px;line-height:27.5px;padding-left:9px;">3</div>
<div class="gc" style="left:680px;top:377.78px;width:146px;height:27px;line-height:27.5px;padding-left:9px;">BE-DJK-DLX</div>
<div class="gc" style="left:826px;top:377.78px;width:100px;height:27px;line-height:27.5px;padding-left:9px;">1749.00</div>
<div class="gc" style="left:926px;top:377.78px;width:98px;height:27px;line-height:27.5px;padding-left:9px;">623</div>
<div class="gc" style="left:0px;top:404.84px;width:51px;height:27px;line-height:27.5px;padding-left:7px;">15</div>
<div class="gc" style="left:51px;top:404.84px;width:95px;height:27px;line-height:27.5px;padding-left:9px;">41</div>
<div class="gc" style="left:146px;top:404.84px;width:128px;height:27px;line-height:27.5px;padding-left:9px;">JEWELRY-I</div>
<div class="gc" style="left:274px;top:404.84px;width:304px;height:27px;line-height:27.5px;padding-left:9px;">The Basic Jewelry Kit</div>
<div class="gc" style="left:578px;top:404.84px;width:102px;height:27px;line-height:27.5px;padding-left:9px;">3</div>
<div class="gc" style="left:680px;top:404.84px;width:146px;height:27px;line-height:27.5px;padding-left:9px;">BE-BJK-1</div>
<div class="gc" style="left:826px;top:404.84px;width:100px;height:27px;line-height:27.5px;padding-left:9px;">1299.00</div>
<div class="gc" style="left:926px;top:404.84px;width:98px;height:27px;line-height:27.5px;padding-left:9px;">663</div>
<div class="gc" style="left:0px;top:431.90px;width:51px;height:27px;line-height:27.5px;padding-left:7px;">16</div>
<div class="gc" style="left:51px;top:431.90px;width:95px;height:27px;line-height:27.5px;padding-left:9px;">20</div>
<div class="gc" style="left:146px;top:431.90px;width:128px;height:27px;line-height:27.5px;padding-left:9px;">JOKES</div>
<div class="gc" style="left:274px;top:431.90px;width:304px;height:27px;line-height:27.5px;padding-left:9px;">The Best of Computer Humor</div>
<div class="gc" style="left:578px;top:431.90px;width:102px;height:27px;line-height:27.5px;padding-left:9px;">2</div>
<div class="gc" style="left:680px;top:431.90px;width:146px;height:27px;line-height:27.5px;padding-left:9px;">BE-12345-12</div>
<div class="gc" style="left:826px;top:431.90px;width:100px;height:27px;line-height:27.5px;padding-left:9px;">12.00</div>
<div class="gc" style="left:926px;top:431.90px;width:98px;height:27px;line-height:27.5px;padding-left:9px;">500</div>
<svg class="abs" style="left:545px;top:29px" width="20" height="20"><circle cx="10" cy="10" r="8" fill="none" stroke="#3a3a3a" stroke-width="1.5"/><path d="M10 4.5v6M6.5 12c1 2.5 6 2.5 7 0" stroke="#3a3a3a" stroke-width="1.5" fill="none"/></svg>
<svg class="abs" style="left:507px;top:33px" width="32" height="14"><path d="M3.5 10V2.2H9.0V11" stroke="#2a2a2a" stroke-width="1.3" fill="none"/><path d="M3.5 1.6H9.0" stroke="#2a2a2a" stroke-width="2.2"/><ellipse cx="2.2" cy="10.6" rx="2" ry="1.6" fill="#2a2a2a"/><ellipse cx="7.7" cy="11.4" rx="2" ry="1.6" fill="#2a2a2a"/><path d="M17 10.5V1.5L19.5 5" stroke="#2a2a2a" stroke-width="1.3" fill="none"/><ellipse cx="15.7" cy="11" rx="2" ry="1.6" fill="#2a2a2a"/><path d="M23.5 10V2.2H29.0V11" stroke="#2a2a2a" stroke-width="1.3" fill="none"/><path d="M23.5 1.6H29.0" stroke="#2a2a2a" stroke-width="2.2"/><ellipse cx="22.2" cy="10.6" rx="2" ry="1.6" fill="#2a2a2a"/><ellipse cx="27.7" cy="11.4" rx="2" ry="1.6" fill="#2a2a2a"/></svg>
</div>
<div id="status" class="abs">
<svg class="abs" style="left:6px;top:6px" width="18" height="18"><circle cx="9" cy="9" r="8.5" fill="#1f9b2c"/><path d="M4.5 9.5l3 3 6-7" stroke="#fff" stroke-width="2" fill="none"/></svg>
<div class="abs" style="left:30px;top:0;line-height:29px;font-size:17.9px;color:#1e1e1e">Query executed successfully.</div>
<div class="abs" style="left:978px;top:5px;width:1px;height:20px;background:#e8dc90"></div>
<div class="abs" style="left:986px;top:1px;line-height:29px;font-size:16.8px;color:#1e1e1e">LAPTOP-AV (14.0 RTM)</div>
<div class="abs" style="left:1179px;top:5px;width:1px;height:20px;background:#e8dc90"></div>
<div class="abs" style="left:1187px;top:1px;line-height:29px;font-size:16.8px;color:#1e1e1e;white-space:nowrap">LAPTOP-AV\Andre (74)</div>
</div>
<svg class="abs" style="left:182px;top:586px" width="18" height="26"><path d="M1.75 1.5V20.3L6 16.3L9.8 23.6L12.6 22.3L8.8 15.2H14.8Z" fill="#fff" stroke="#2a2a2a" stroke-width="1.3" stroke-linejoin="round"/></svg>
<div style="position:absolute;background:rgba(0,0,0,0.5);-webkit-backdrop-filter:blur(0.9px);backdrop-filter:blur(0.9px);left:0;top:0;width:1920px;height:352px"></div>
<div style="position:absolute;background:rgba(0,0,0,0.5);-webkit-backdrop-filter:blur(0.9px);backdrop-filter:blur(0.9px);left:0;top:873px;width:1920px;height:207px"></div>
<div style="position:absolute;background:rgba(0,0,0,0.5);-webkit-backdrop-filter:blur(0.9px);backdrop-filter:blur(0.9px);left:0;top:352px;width:61px;height:521px"></div>
<div style="position:absolute;background:rgba(0,0,0,0.5);-webkit-backdrop-filter:blur(0.9px);backdrop-filter:blur(0.9px);left:509px;top:352px;width:1411px;height:521px"></div>
</body></html>
